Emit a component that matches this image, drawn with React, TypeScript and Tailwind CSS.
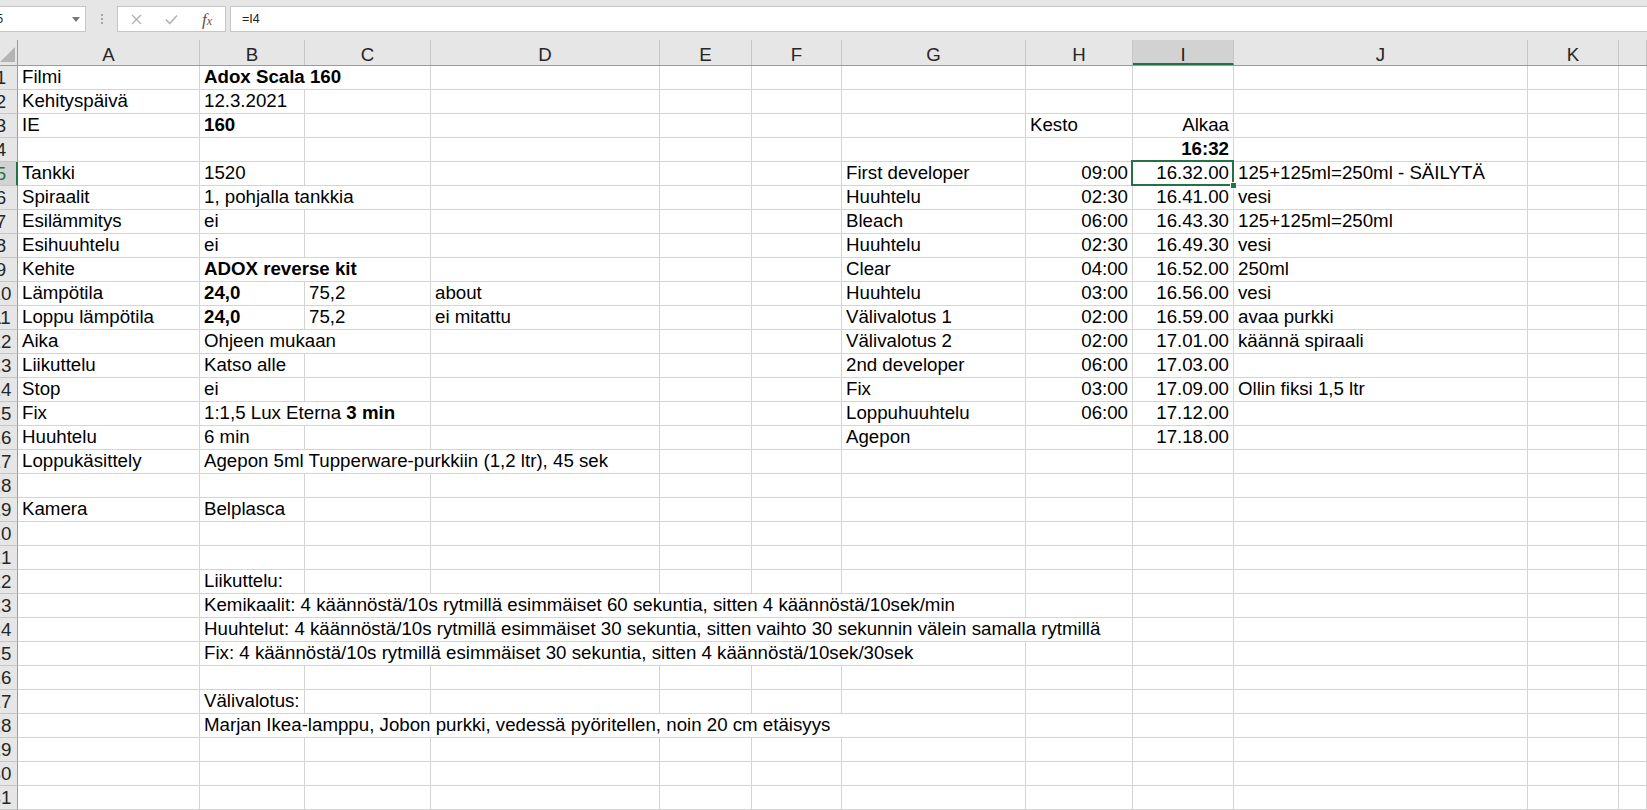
import React from 'react';

type Cell = { t: React.ReactNode; span?: number; right?: boolean; bold?: boolean };

const LETTERS = ['A', 'B', 'C', 'D', 'E', 'F', 'G', 'H', 'I', 'J', 'K', 'L'];
const GRID =
  'grid grid-cols-[18px_182px_105px_126px_229px_92px_90px_184px_107px_101px_294px_91px_1fr]';
const SPAN: Record<number, string> = {
  1: '',
  2: 'col-span-2',
  3: 'col-span-3',
  6: 'col-span-6',
  7: 'col-span-7',
};

const t = (h: string, i: string, j?: string): Record<string, Cell> => {
  const o: Record<string, Cell> = {};
  if (h) o.H = { t: h, right: true };
  o.I = { t: i, right: true };
  if (j) o.J = { t: j };
  return o;
};

const DATA: Record<number, Record<string, Cell>> = {
  1: { A: { t: 'Filmi' }, B: { t: 'Adox Scala 160', bold: true, span: 2 } },
  2: { A: { t: 'Kehityspäivä' }, B: { t: '12.3.2021' } },
  3: {
    A: { t: 'IE' },
    B: { t: '160', bold: true },
    H: { t: 'Kesto' },
    I: { t: 'Alkaa', right: true },
  },
  4: { I: { t: '16:32', right: true, bold: true } },
  5: {
    A: { t: 'Tankki' },
    B: { t: '1520' },
    G: { t: 'First developer' },
    ...t('09:00', '16.32.00', '125+125ml=250ml - SÄILYTÄ'),
  },
  6: {
    A: { t: 'Spiraalit' },
    B: { t: '1, pohjalla tankkia', span: 2 },
    G: { t: 'Huuhtelu' },
    ...t('02:30', '16.41.00', 'vesi'),
  },
  7: {
    A: { t: 'Esilämmitys' },
    B: { t: 'ei' },
    G: { t: 'Bleach' },
    ...t('06:00', '16.43.30', '125+125ml=250ml'),
  },
  8: {
    A: { t: 'Esihuuhtelu' },
    B: { t: 'ei' },
    G: { t: 'Huuhtelu' },
    ...t('02:30', '16.49.30', 'vesi'),
  },
  9: {
    A: { t: 'Kehite' },
    B: { t: 'ADOX reverse kit', bold: true, span: 2 },
    G: { t: 'Clear' },
    ...t('04:00', '16.52.00', '250ml'),
  },
  10: {
    A: { t: 'Lämpötila' },
    B: { t: '24,0', bold: true },
    C: { t: '75,2' },
    D: { t: 'about' },
    G: { t: 'Huuhtelu' },
    ...t('03:00', '16.56.00', 'vesi'),
  },
  11: {
    A: { t: 'Loppu lämpötila' },
    B: { t: '24,0', bold: true },
    C: { t: '75,2' },
    D: { t: 'ei mitattu' },
    G: { t: 'Välivalotus 1' },
    ...t('02:00', '16.59.00', 'avaa purkki'),
  },
  12: {
    A: { t: 'Aika' },
    B: { t: 'Ohjeen mukaan', span: 2 },
    G: { t: 'Välivalotus 2' },
    ...t('02:00', '17.01.00', 'käännä spiraali'),
  },
  13: {
    A: { t: 'Liikuttelu' },
    B: { t: 'Katso alle' },
    G: { t: '2nd developer' },
    ...t('06:00', '17.03.00'),
  },
  14: {
    A: { t: 'Stop' },
    B: { t: 'ei' },
    G: { t: 'Fix' },
    ...t('03:00', '17.09.00', 'Ollin fiksi 1,5 ltr'),
  },
  15: {
    A: { t: 'Fix' },
    B: {
      t: (
        <>
          1:1,5 Lux Eterna <span className="font-bold">3 min</span>
        </>
      ),
      span: 2,
    },
    G: { t: 'Loppuhuuhtelu' },
    ...t('06:00', '17.12.00'),
  },
  16: {
    A: { t: 'Huuhtelu' },
    B: { t: '6 min' },
    G: { t: 'Agepon' },
    ...t('', '17.18.00'),
  },
  17: {
    A: { t: 'Loppukäsittely' },
    B: { t: 'Agepon 5ml Tupperware-purkkiin (1,2 ltr), 45 sek', span: 3 },
  },
  19: { A: { t: 'Kamera' }, B: { t: 'Belplasca' } },
  22: { B: { t: 'Liikuttelu:' } },
  23: {
    B: {
      t: 'Kemikaalit: 4 käännöstä/10s rytmillä esimmäiset 60 sekuntia, sitten 4 käännöstä/10sek/min',
      span: 6,
    },
  },
  24: {
    B: {
      t: 'Huuhtelut: 4 käännöstä/10s rytmillä esimmäiset 30 sekuntia, sitten vaihto 30 sekunnin välein samalla rytmillä',
      span: 7,
    },
  },
  25: {
    B: {
      t: 'Fix: 4 käännöstä/10s rytmillä esimmäiset 30 sekuntia, sitten 4 käännöstä/10sek/30sek',
      span: 6,
    },
  },
  27: { B: { t: 'Välivalotus:' } },
  28: {
    B: {
      t: 'Marjan Ikea-lamppu, Jobon purkki, vedessä pyöritellen, noin 20 cm etäisyys',
      span: 6,
    },
  },
};

function Row({ n }: { n: number }) {
  const row = DATA[n] || {};
  const cells: React.ReactNode[] = [];
  let i = 0;
  while (i < LETTERS.length) {
    const letter = LETTERS[i];
    const c = row[letter];
    const span = c?.span ?? 1;
    const active = n === 5 && letter === 'I';
    cells.push(
      <div
        key={letter}
        className={`${SPAN[span]} relative h-[24px] border-r border-b border-[#d4d4d4] whitespace-nowrap px-[4px] leading-[22px] text-black ${
          c?.right ? 'text-right' : 'text-left'
        } ${c?.bold ? 'font-bold' : ''} ${active ? 'overflow-visible' : 'overflow-hidden'}`}
      >
        {c?.t}
        {active && (
          <>
            <div className="absolute -left-[2px] -top-[2px] -right-[1px] -bottom-[1px] border-2 border-[#217346] z-10 pointer-events-none" />
            <div className="absolute -right-[4px] -bottom-[4px] w-[7px] h-[7px] bg-[#217346] border border-white z-20" />
          </>
        )}
      </div>
    );
    i += span;
  }
  const sel = n === 5;
  return (
    <div className={GRID}>
      <div
        className={`h-[24px] overflow-hidden border-b ${
          sel
            ? 'bg-[#d2d2d2] border-r-2 border-r-[#217346] border-b-[#c6c6c6] text-[#217346]'
            : 'bg-[#e6e6e6] border-r border-r-[#9b9b9b] border-b-[#c6c6c6] text-[#262626]'
        }`}
      >
        <div className="w-[34px] -ml-[16px] text-center leading-[23px]">{n}</div>
      </div>
      {cells}
    </div>
  );
}

function Header() {
  return (
    <div className={`${GRID} h-[26px] bg-[#e6e6e6] border-b border-[#9b9b9b]`}>
      <div className="border-r border-[#9b9b9b] flex items-end justify-end pr-[2px] pb-[3px]">
        <svg width="15" height="15" viewBox="0 0 15 15">
          <polygon points="0,15 15,15 15,0" fill="#b4b4b4" />
        </svg>
      </div>
      {LETTERS.map((l) => (
        <div
          key={l}
          className={`text-center leading-[24px] pt-[3px] border-r border-[#c6c6c6] overflow-hidden ${
            l === 'I'
              ? 'bg-[#d2d2d2] border-b-2 border-b-[#217346] text-[#1f1f1f]'
              : 'text-[#262626]'
          }`}
        >
          {l === 'L' ? '' : l}
        </div>
      ))}
    </div>
  );
}

function TopBar() {
  return (
    <div className="h-[40px] bg-[#e6e6e6] flex items-start pt-[6px]">
      <div className="w-[86px] h-[26px] bg-white border border-l-0 border-[#c6c6c6] flex items-center overflow-hidden">
        <span className="-ml-[4px] text-[13px] text-[#333]">5</span>
        <svg className="ml-auto mr-[5px]" width="8" height="5" viewBox="0 0 8 5">
          <polygon points="0,0 8,0 4,5" fill="#777" />
        </svg>
      </div>
      <div className="w-[31px] h-[26px] flex flex-col items-center justify-center gap-[2px]">
        <div className="w-[2px] h-[2px] bg-[#a6a6a6]" />
        <div className="w-[2px] h-[2px] bg-[#a6a6a6]" />
        <div className="w-[2px] h-[2px] bg-[#a6a6a6]" />
      </div>
      <div className="w-[109px] h-[26px] bg-white border border-[#c6c6c6] flex items-center">
        <div className="w-[36px] flex justify-center">
          <svg width="11" height="11" viewBox="0 0 11 11">
            <path d="M1 1 L10 10 M10 1 L1 10" stroke="#b3b3b3" strokeWidth="1.4" fill="none" />
          </svg>
        </div>
        <div className="w-[35px] flex justify-center">
          <svg width="13" height="11" viewBox="0 0 13 11">
            <path d="M1 5.5 L4.8 9.5 L12 1.5" stroke="#b3b3b3" strokeWidth="1.6" fill="none" />
          </svg>
        </div>
        <div className="w-[36px] flex justify-center">
          <span className="font-['Liberation_Serif',serif] italic text-[17px] text-[#555] leading-none">
            f<span className="text-[12px]">x</span>
          </span>
        </div>
      </div>
      <div className="flex-1 ml-[4px] h-[26px] bg-white border border-r-0 border-[#c6c6c6] flex items-center pl-[11px] text-[12.5px] text-[#222]">
        =I4
      </div>
    </div>
  );
}

export default function App() {
  const rows = Array.from({ length: 31 }, (_, k) => k + 1);
  return (
    <div className="w-[1647px] h-[810px] overflow-hidden bg-white font-['Liberation_Sans',Arial,sans-serif] text-[18.7px]">
      <TopBar />
      <Header />
      {rows.map((n) => (
        <Row key={n} n={n} />
      ))}
    </div>
  );
}
